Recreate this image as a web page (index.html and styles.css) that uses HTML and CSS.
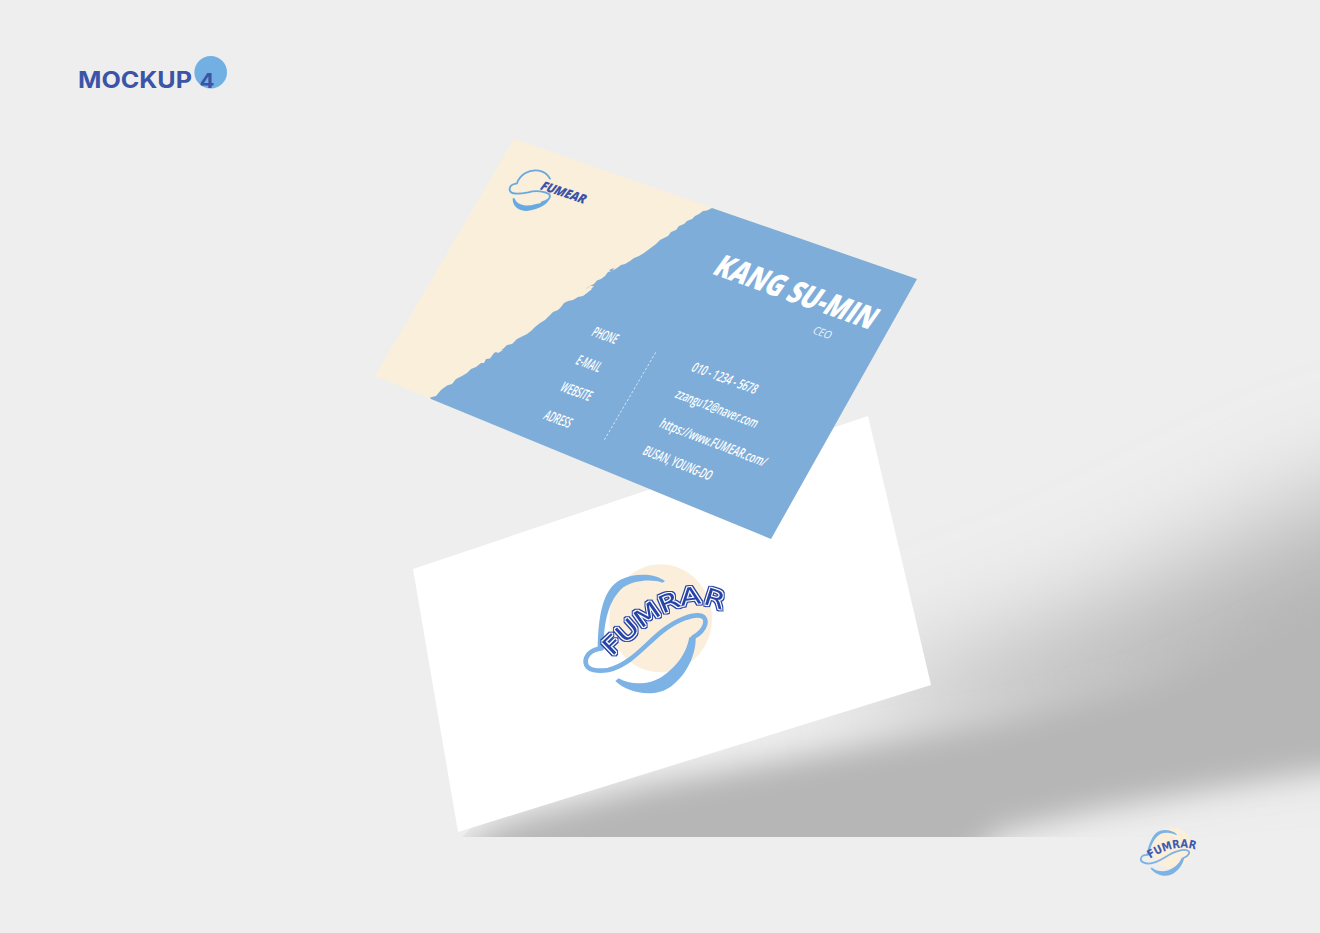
FILE: index.html
```html
<!DOCTYPE html>
<html lang="en">
<head>
<meta charset="utf-8">
<title>Fumrar business card mockup</title>
<link rel="stylesheet" href="styles.css">
</head>
<body>
<svg class="stage" viewBox="0 0 1320 933" width="1320" height="933" xmlns="http://www.w3.org/2000/svg">
  <defs>
    <filter id="blurWide" filterUnits="userSpaceOnUse" x="400" y="0" width="1400" height="1200"><feGaussianBlur stdDeviation="55"/></filter>
    <filter id="blurMid" filterUnits="userSpaceOnUse" x="300" y="300" width="1500" height="900"><feGaussianBlur stdDeviation="15"/></filter>
    <filter id="inline" x="-10%" y="-20%" width="120%" height="140%" color-interpolation-filters="sRGB">
      <feMorphology in="SourceAlpha" operator="dilate" radius="7.5" result="outer"/>
      <feFlood flood-color="#2743a6"/>
      <feComposite in2="outer" operator="in" result="outerC"/>
      <feMorphology in="SourceAlpha" operator="dilate" radius="4.5" result="mid"/>
      <feFlood flood-color="#ffffff"/>
      <feComposite in2="mid" operator="in" result="midC"/>
      <feMorphology in="SourceAlpha" operator="dilate" radius="1" result="core"/>
      <feFlood flood-color="#2743a6"/>
      <feComposite in2="core" operator="in" result="coreC"/>
      <feMerge><feMergeNode in="outerC"/><feMergeNode in="midC"/><feMergeNode in="coreC"/></feMerge>
    </filter>
    <clipPath id="shadowClip"><polygon points="462,837 868,416 900,0 1320,0 1320,837"/></clipPath>
    <path id="arcMain" d="M126 320 C 195 253 270 176 365 164 C 400 160 432 168 462 186"/>
    <path id="arcSmall" d="M118 322 C 205 240 310 160 458 180"/>
    <g id="swoosh">
      <path class="loop" d="M95 295 C 60 298 45 320 47 338 C 50 362 85 365 115 360 C 180 345 225 285 275 245 C 320 210 370 190 395 198 C 415 205 410 240 370 262"/>
      <path class="arc" d="M285 93 C 250 68 190 70 150 90 C 100 118 85 190 83 298 L 101 296 C 100 220 115 150 160 112 C 195 88 250 87 278 98 Z"/>
      <path class="arc" d="M358 262 L 377 262 C 379 310 352 375 302 410 C 250 447 170 427 136 393 L 146 385 C 185 408 240 403 276 380 C 320 350 350 310 358 262 Z"/>
    </g>
  </defs>

  <rect class="bg" width="1320" height="933"/>

  <g clip-path="url(#shadowClip)">
    <polygon class="shade" filter="url(#blurWide)" points="820,720 1100,610 1320,500 1560,430 1560,690 1000,740"/>
    <polygon class="shade" filter="url(#blurMid)" points="440,870 490,830 520,818 650,785 800,757 1000,722 1150,682 1320,605 1500,560 1500,760 1320,770 1200,790 1100,808 1000,832 930,900"/>
  </g>

  <polygon class="card-white" points="413,569 868,416 931,685 458,832"/>

  <polygon class="card-cream" points="514,139 917,279 771,539 375,376"/>
  <polygon class="card-blue" points="431,399 430,397.5 436,396 441,390 447,385.5 452,384 456,379 462,376 467,373 471,369 476,367 481,363 484,363 486,359 490,358.5 494,353 500,350 503,349 507,345 512,344 517,339 522,336.5 527,334 531,331 535,327 540,323 545,320 549,316 553,312 558,310 561,307 564,303 568,301 573,300 578,297 583,296 587,293 592,289 586,288.5 590,286 594,284 597,280.5 601,279 605,276 608,272 612,271 617,268 621,265 625,264 630,261 634,258 639,256 644,253 648,250 652,247 656,244 660,240 664,238 668,236 671,232 676,230 679,226 684,224 687,221 692,219 695,216 699,214 703,211 707,210.5 712,208 917,279 771,539"/>
  <polygon class="card-cream" points="494,351 500,349 503,350 498,353"/>
  <polygon class="card-cream" points="585,290 590,286 594,286 590,290"/>
  <polygon class="card-blue" points="609,270 614,268 612,272"/>

  <g transform="translate(370,130) scale(.3333)">
    <path class="mini-line" d="M540 146 C 525 118 490 115 465 130 C 450 140 444 150 441 160 C 425 162 418 170 419 180 C 422 195 450 192 475 187 C 500 180 525 185 538 193 C 545 205 530 214 515 217"/>
    <path class="mini-arc" d="M428 205 L 434 205 C 440 225 470 232 495 223 C 510 219 525 217 537 210 C 527 228 495 241 470 243 C 445 243 427 229 428 205 Z"/>
  </g>
  <text class="mini-brand" transform="matrix(.95,.315,-.6,.8,539,189)" textLength="46.5" lengthAdjust="spacingAndGlyphs">FUMEAR</text>

  <text class="name" transform="matrix(.942,.335,-.58,.815,711,273.5)" textLength="168" lengthAdjust="spacingAndGlyphs">KANG SU-MIN</text>
  <text class="role" transform="matrix(.94,.34,-.55,.835,811.7,333)" textLength="18.5" lengthAdjust="spacingAndGlyphs">CEO</text>

  <text class="label" transform="matrix(.94,.34,-.55,.835,590.5,335.5)" textLength="25.5" lengthAdjust="spacingAndGlyphs">PHONE</text>
  <text class="label" transform="matrix(.94,.34,-.55,.835,574.5,363.8)" textLength="25" lengthAdjust="spacingAndGlyphs">E-MAIL</text>
  <text class="label" transform="matrix(.94,.34,-.55,.835,559,390.5)" textLength="31.5" lengthAdjust="spacingAndGlyphs">WEBSITE</text>
  <text class="label" transform="matrix(.94,.34,-.55,.835,542.5,418.8)" textLength="27.5" lengthAdjust="spacingAndGlyphs">ADRESS</text>

  <line class="divider" x1="655.7" y1="352.3" x2="604.3" y2="440"/>

  <text class="value" transform="matrix(.94,.345,-.55,.835,690.3,370.7)" textLength="68" lengthAdjust="spacingAndGlyphs">010 - 1234 - 5678</text>
  <text class="value" transform="matrix(.935,.355,-.55,.835,674,397.3)" textLength="86.5" lengthAdjust="spacingAndGlyphs">zzangu12@naver.com</text>
  <text class="value" transform="matrix(.935,.355,-.55,.835,658.3,426.7)" textLength="112.5" lengthAdjust="spacingAndGlyphs">https://www.FUMEAR.com/</text>
  <text class="value" transform="matrix(.93,.365,-.55,.835,641.5,454)" textLength="72.5" lengthAdjust="spacingAndGlyphs">BUSAN, YOUNG-DO</text>

  <g transform="translate(570,550) scale(.3333)">
    <ellipse class="sun" cx="272" cy="205" rx="154" ry="162"/>
    <use href="#swoosh"/>
    <text class="brand-main" filter="url(#inline)"><textPath href="#arcMain" textLength="385" lengthAdjust="spacingAndGlyphs">FUMRAR</textPath></text>
  </g>

  <g class="logo-small" transform="translate(1137,821) rotate(12 30 30) scale(.128)">
    <ellipse class="sun" cx="272" cy="205" rx="154" ry="162"/>
    <use href="#swoosh"/>
    <text class="brand-small"><textPath href="#arcSmall" textLength="375" lengthAdjust="spacingAndGlyphs">FUMRAR</textPath></text>
  </g>

  <circle class="badge" cx="210.7" cy="72.3" r="16.3"/>
  <text class="logo-word" x="78" y="88.3" textLength="114" lengthAdjust="spacingAndGlyphs">MOCKUP</text>
  <text class="logo-num" x="199.5" y="88.3" textLength="15" lengthAdjust="spacingAndGlyphs">4</text>
</svg>
</body>
</html>
```

FILE: styles.css
```css
html, body {
  margin: 0;
  padding: 0;
  background: #eeeeee;
}

.stage {
  display: block;
}

.bg { fill: #eeeeee; }
.shade { fill: #b6b6b6; }
.card-white { fill: #ffffff; }
.card-cream { fill: #f9efdb; }
.card-blue { fill: #7eadd9; }

.sun { fill: #fbefdc; }

.loop {
  fill: none;
  stroke: #7db3e4;
  stroke-width: 14;
  stroke-linecap: round;
  stroke-linejoin: round;
}
.arc { fill: #7db3e4; }

.mini-line {
  fill: none;
  stroke: #68a9e2;
  stroke-width: 5.5;
  stroke-linecap: round;
}
.mini-arc { fill: #68a9e2; }

.mini-brand {
  font-family: "Open Sans", sans-serif;
  font-weight: 800;
  font-size: 13.5px;
  fill: #3b52a8;
}

.name {
  font-family: "Open Sans", sans-serif;
  font-weight: 800;
  font-size: 33px;
  fill: #ffffff;
}

.role {
  font-family: "Open Sans", sans-serif;
  font-weight: 400;
  font-size: 11.5px;
  fill: #f2f6fb;
}

.label {
  font-family: "Open Sans", sans-serif;
  font-weight: 600;
  font-size: 15px;
  fill: #ffffff;
}

.value {
  font-family: "Open Sans", sans-serif;
  font-weight: 600;
  font-size: 14.5px;
  fill: #ffffff;
}

.divider {
  stroke: #d5e4f3;
  stroke-width: 1;
  stroke-dasharray: 2.5 2;
}

.brand-main {
  font-family: "DejaVu Sans", sans-serif;
  font-weight: 400;
  font-size: 72px;
  fill: #2743a6;
}

.brand-small {
  font-family: "DejaVu Sans", sans-serif;
  font-weight: 700;
  font-size: 90px;
  fill: #3f5aac;
}

.badge { fill: #72b0e4; }

.logo-word {
  font-family: "Inter", sans-serif;
  font-weight: 700;
  font-size: 23px;
  fill: #3a55a8;
}

.logo-num {
  font-family: "Inter", sans-serif;
  font-weight: 700;
  font-size: 20px;
  fill: #3a55a8;
}
```
